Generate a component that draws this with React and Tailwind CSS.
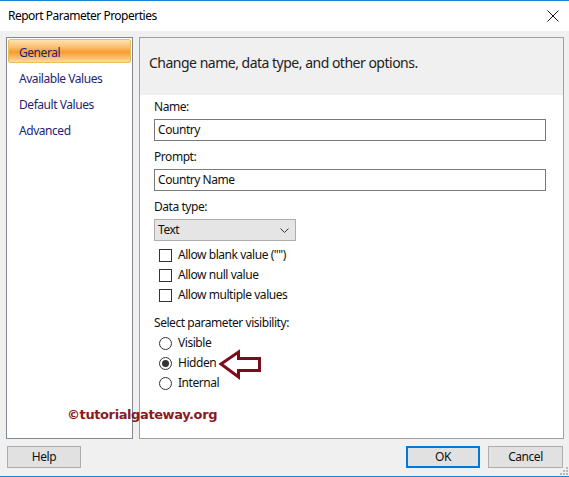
import React from "react";

const font = { fontFamily: '"Segoe UI", "Noto Sans", "Open Sans", sans-serif' };

function Checkbox({ label }) {
  return (
    <div className="flex items-center h-[20px] pl-[5px]">
      <span className="w-[13px] h-[13px] border border-[#333333] bg-white shrink-0" />
      <span className="ml-[6px]">{label}</span>
    </div>
  );
}

function Radio({ label, checked }) {
  return (
    <div className="flex items-center h-[20px] pl-[5px]">
      <span className="w-[13px] h-[13px] rounded-full border border-[#333333] bg-white shrink-0 flex items-center justify-center">
        {checked && <span className="w-[7px] h-[7px] rounded-full bg-[#333333]" />}
      </span>
      <span className="ml-[6px]">{label}</span>
    </div>
  );
}

export default function App() {
  return (
    <div
      className="relative w-[569px] h-[477px] bg-[#f0f0f0] text-[12px] tracking-[-0.45px] text-[#111] border-t border-b border-[#1883d7] overflow-hidden flex flex-col"
      style={font}
    >
      {/* Title bar */}
      <div className="h-[30px] bg-white flex items-center justify-between pl-[8px] pr-[10px] shrink-0">
        <span className="text-[12px] text-black tracking-[-0.5px]">Report Parameter Properties</span>
        <svg width="12" height="12" viewBox="0 0 12 12">
          <path d="M0.5 0.5 L11.5 11.5 M11.5 0.5 L0.5 11.5" stroke="#111" strokeWidth="1" />
        </svg>
      </div>

      {/* Body */}
      <div className="flex gap-[6px] pl-[6px] pt-[6px]">
        {/* Left nav */}
        <div className="w-[127px] h-[402px] bg-white border border-[#828790] p-[1px] flex flex-col">
          <div className="h-[24px] flex items-center pt-[3px] pl-[10px] text-[#1e2475] border border-[#e9bf56] rounded-[2px] bg-[linear-gradient(to_bottom,#fde2b0_0%,#fbbd6a_35%,#f89a30_55%,#fbc47a_85%,#fddca6_100%)]">
            General
          </div>
          <div className="h-[26px] flex items-center pt-[5px] pl-[11px] text-[#1e2475]">Available Values</div>
          <div className="h-[26px] flex items-center pt-[5px] pl-[11px] text-[#1e2475]">Default Values</div>
          <div className="h-[26px] flex items-center pt-[5px] pl-[11px] text-[#1e2475]">Advanced</div>
        </div>

        {/* Right panel */}
        <div className="w-[425px] h-[402px] bg-white border border-[#a0a0a0] flex flex-col">
          <div className="h-[57px] bg-[#f0f0f0] pt-[15px] pl-[9px] text-[14px] leading-[20px] tracking-[-0.5px] text-[#222]">
            Change name, data type, and other options.
          </div>
          <div className="pl-[14px] pt-[4px] flex flex-col">
            <div className="h-[16px] flex items-center">Name:</div>
            <div className="mt-[4px] w-[392px] h-[22px] border border-[#7a7a7a] flex items-center pl-[3px]">Country</div>
            <div className="mt-[8px] h-[16px] flex items-center">Prompt:</div>
            <div className="mt-[4px] w-[392px] h-[22px] border border-[#7a7a7a] flex items-center pl-[3px]">Country Name</div>
            <div className="mt-[8px] h-[16px] flex items-center">Data type:</div>
            <div className="mt-[4px] w-[142px] h-[22px] border border-[#adadad] bg-[#e5e5e5] flex items-center justify-between pl-[3px] pr-[6px]">
              <span>Text</span>
              <svg width="9" height="5" viewBox="0 0 9 5">
                <path d="M0.5 0.5 L4.5 4.5 L8.5 0.5" stroke="#333" strokeWidth="1" fill="none" />
              </svg>
            </div>
            <div className="mt-[4px] flex flex-col">
              <Checkbox label={'Allow blank value ("")'} />
              <Checkbox label="Allow null value" />
              <Checkbox label="Allow multiple values" />
            </div>
            <div className="mt-[10px] h-[16px] flex items-center">Select parameter visibility:</div>
            <div className="mt-[2px] flex flex-col">
              <Radio label="Visible" />
              <Radio label="Hidden" checked />
              <Radio label="Internal" />
            </div>
          </div>
        </div>
      </div>

      {/* Buttons */}
      <div className="flex items-center pl-[7px] pr-[6px] mt-[7px]">
        <div className="w-[74px] h-[22px] bg-[#e1e1e1] border border-[#adadad] flex items-center justify-center">Help</div>
        <div className="ml-auto w-[74px] h-[22px] bg-[#e1e1e1] border-2 border-[#0078d7] flex items-center justify-center">OK</div>
        <div className="ml-[8px] w-[75px] h-[22px] bg-[#e1e1e1] border border-[#adadad] flex items-center justify-center">Cancel</div>
      </div>

      {/* Resize grip */}
      <svg className="absolute right-[1px] bottom-[1px]" width="8" height="8" viewBox="0 0 8 8">
        <rect x="6" y="0" width="2" height="2" fill="#b8b8b8" />
        <rect x="3" y="3" width="2" height="2" fill="#b8b8b8" />
        <rect x="6" y="3" width="2" height="2" fill="#b8b8b8" />
        <rect x="0" y="6" width="2" height="2" fill="#b8b8b8" />
        <rect x="3" y="6" width="2" height="2" fill="#b8b8b8" />
        <rect x="6" y="6" width="2" height="2" fill="#b8b8b8" />
      </svg>

      {/* Arrow annotation */}
      <svg className="absolute left-[218px] top-[347px]" width="46" height="34" viewBox="0 0 46 34">
        <path
          d="M3 16 L20.5 4 L20.5 10.5 L41.5 10.5 L41.5 22.5 L20.5 22.5 L20.5 29 Z"
          fill="none"
          stroke="#7e0b1c"
          strokeWidth="3"
          strokeLinejoin="miter"
        />
      </svg>

      {/* Watermark */}
      <div
        className="absolute left-[67px] top-[404px] text-[13px] font-bold text-[#8b1a22] tracking-[-0.4px]"
        style={{ fontFamily: '"DejaVu Sans", Verdana, sans-serif' }}
      >
        ©tutorialgateway.org
      </div>
    </div>
  );
}
